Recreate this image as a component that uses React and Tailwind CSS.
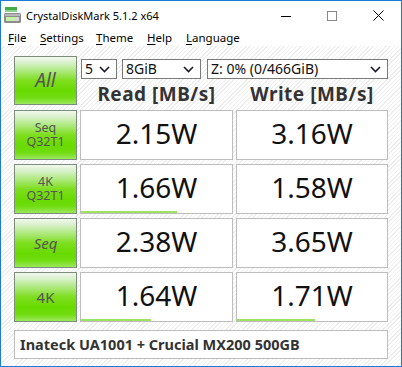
import React from "react";

const Chevron = () => (
  <svg width="11" height="7" viewBox="0 0 11 7" className="shrink-0">
    <path d="M1 1 L5.5 5.5 L10 1" fill="none" stroke="#1a1a2a" strokeWidth="1.6" />
  </svg>
);

const Select = ({ w, label }) => (
  <div className={`${w} h-[20px] bg-white border border-[#7a7a7a] flex items-center pl-[3px] pr-[6px] justify-between`}>
    <span className="text-[14px] leading-none text-[#111]">{label}</span>
    <Chevron />
  </div>
);

const GreenBtn = ({ children, h = "h-[50px]" }) => (
  <div
    className={`${h} border border-[#7d8d7d] flex flex-col items-center justify-center text-[#555] bg-[linear-gradient(to_bottom,#f2f8ee_0%,#d9f1cc_12%,#a8e874_32%,#7ede1e_50%,#68da00_72%,#70dc10_86%,#9ce85c_100%)]`}
  >
    {children}
  </div>
);

const ValueBox = ({ value, bar }) => (
  <div className="h-[50px] bg-white border border-[#bdbdbd] flex flex-col">
    <div className="flex-1 flex items-center justify-center pb-[2px]">
      <span className="text-[28px] leading-none text-[#111]">{value}</span>
    </div>
    <div className="h-[2px] flex">
      <div className="h-[2px] bg-[#9ee35f]" style={{ width: bar }} />
    </div>
  </div>
);

const rows = [
  { label: "Seq\nQ32T1", two: true, read: "2.15W", write: "3.16W", rb: 0, wb: 0 },
  { label: "4K\nQ32T1", two: true, read: "1.66W", write: "1.58W", rb: 96, wb: 0 },
  { label: "Seq", italic: true, read: "2.38W", write: "3.65W", rb: 0, wb: 0 },
  { label: "4K", read: "1.64W", write: "1.71W", rb: 70, wb: 78 },
];

export default function App() {
  return (
    <div className="w-[402px] h-[367px] border border-[#1c7bd6] bg-white flex flex-col overflow-hidden font-['Noto_Sans',sans-serif]">
      {/* Title bar */}
      <div className="h-[29px] flex items-center shrink-0">
        <svg width="17" height="16" viewBox="0 0 17 16" className="ml-[3px] mt-[-2px]">
          <rect x="1" y="0" width="12" height="3" fill="#3fae49" />
          <rect x="1" y="3" width="12" height="2" fill="#8fd18f" />
          <rect x="0" y="6" width="17" height="10" rx="1.5" fill="#8c8c8c" />
          <rect x="1" y="7" width="15" height="2" fill="#b8b8b8" />
          <rect x="2" y="10" width="9" height="4" fill="#c7f0a8" />
          <rect x="11" y="10" width="4" height="4" fill="#d8d8d8" />
        </svg>
        <span className="ml-[5px] text-[11px] leading-none text-[#000]">CrystalDiskMark 5.1.2 x64</span>
        <div className="ml-auto flex h-full">
          <div className="w-[46px] flex items-center justify-center">
            <svg width="10" height="10" viewBox="0 0 10 10">
              <path d="M0 5.5 H10" stroke="#000" strokeWidth="1" />
            </svg>
          </div>
          <div className="w-[46px] flex items-center justify-center">
            <svg width="10" height="10" viewBox="0 0 10 10">
              <rect x="0.5" y="0.5" width="9" height="9" fill="none" stroke="#888" strokeWidth="1" />
            </svg>
          </div>
          <div className="w-[46px] flex items-center justify-center">
            <svg width="11" height="11" viewBox="0 0 11 11">
              <path d="M0.5 0.5 L10.5 10.5 M10.5 0.5 L0.5 10.5" stroke="#000" strokeWidth="1" />
            </svg>
          </div>
        </div>
      </div>

      {/* Menu bar */}
      <div className="h-[16px] flex items-center text-[11.5px] leading-none text-[#000] shrink-0">
        <span className="ml-[7px] w-[32px]"><span className="underline underline-offset-2">F</span>ile</span>
        <span className="w-[56px]"><span className="underline underline-offset-2">S</span>ettings</span>
        <span className="w-[51px]"><span className="underline underline-offset-2">T</span>heme</span>
        <span className="w-[39px]"><span className="underline underline-offset-2">H</span>elp</span>
        <span><span className="underline underline-offset-2">L</span>anguage</span>
      </div>

      {/* Content */}
      <div className="flex-1 pt-[10px] pl-[13px] bg-[repeating-linear-gradient(135deg,#ffffff_0px,#ffffff_2px,#eeeeee_2px,#eeeeee_3px)]">
        <div className="grid grid-cols-[63px_153px_152px] gap-x-[3px] gap-y-[4px]">
          <GreenBtn h="h-[49px]">
            <span className="text-[19px] italic leading-none">All</span>
          </GreenBtn>
          <div className="col-span-2 flex flex-col pt-[3px]">
            <div className="flex pl-[1px]">
              <Select w="w-[36px]" label="5" />
              <div className="w-[5px]" />
              <Select w="w-[79px]" label="8GiB" />
              <div className="w-[6px]" />
              <Select w="w-[181px]" label="Z: 0% (0/466GiB)" />
            </div>
            <div className="grid grid-cols-[153px_152px] gap-x-[3px] mt-[3px]">
              <div className="text-center text-[19px] tracking-[0.5px] leading-[24px] font-bold text-[#333]">Read [MB/s]</div>
              <div className="text-center text-[19px] tracking-[0.5px] leading-[24px] font-bold text-[#333]">Write [MB/s]</div>
            </div>
          </div>

          {rows.map((r, i) => (
            <React.Fragment key={i}>
              <GreenBtn>
                {r.two ? (
                  <div className="text-[12.5px] leading-[14px] text-center whitespace-pre-line">{r.label}</div>
                ) : (
                  <span className={`text-[15px] leading-none ${r.italic ? "italic" : ""}`}>{r.label}</span>
                )}
              </GreenBtn>
              <ValueBox value={r.read} bar={r.rb} />
              <ValueBox value={r.write} bar={r.wb} />
            </React.Fragment>
          ))}

          <div className="col-span-3 mt-[4px] h-[29px] w-[374px] bg-white border border-[#bdbdbd] flex items-center pl-[5px]">
            <span className="text-[14.5px] font-bold leading-none text-[#333]">Inateck UA1001 + Crucial MX200 500GB</span>
          </div>
        </div>
      </div>
    </div>
  );
}
